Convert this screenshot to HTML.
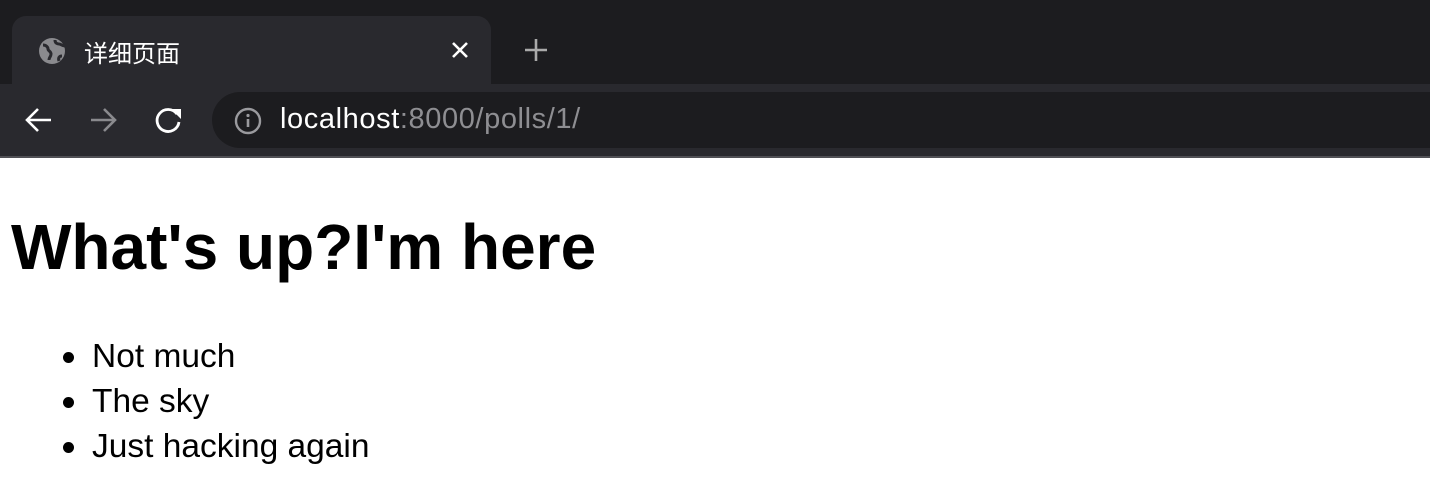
<!DOCTYPE html>
<html><head><meta charset="utf-8"><style>
*{margin:0;padding:0;box-sizing:border-box}
body{width:1430px;height:488px;overflow:hidden;background:#fff;font-family:"Liberation Sans","Noto Sans CJK SC",sans-serif;position:relative}
.top{position:absolute;left:0;top:0;width:1430px;height:84px;background:#1c1c1f}
.tab{position:absolute;left:12px;top:16px;width:479px;height:68px;background:#29292e;border-radius:14px 14px 0 0}
.tb{position:absolute;left:0;top:84px;width:1430px;height:72px;background:#29292e}
.bd{position:absolute;left:0;top:156px;width:1430px;height:2px;background:#505055}
.addr{position:absolute;left:212px;top:92px;width:1260px;height:56px;background:#1c1c1f;border-radius:28px}
.t{position:absolute;white-space:nowrap}
</style></head><body>
<div class="top"></div>
<div class="tab"></div>
<div class="tb"></div>
<div class="bd"></div>
<div class="addr"></div>
<svg style="position:absolute;left:38px;top:37px" width="28" height="28" viewBox="0 0 28 28"><circle cx="14" cy="14" r="13" fill="#8a8a8e"/><path d="M5 8c3 0 5 2 5 4s3 2 3 5-2 3-2 6M17 3c0 3 2 4 4 4s3 2 6 2M24 19c-3 0-4 2-3 5" stroke="#29292e" stroke-width="3" fill="none"/></svg>
<div class="t" style="left:84px;top:34px;font-size:24px;color:#fff">详细页面</div>
<svg style="position:absolute;left:450px;top:40px" width="20" height="20" viewBox="0 0 20 20"><path d="M3 3L17 17M17 3L3 17" stroke="#fff" stroke-width="2.6"/></svg>
<svg style="position:absolute;left:524px;top:38px" width="24" height="24" viewBox="0 0 24 24"><path d="M12 1V23M1 12H23" stroke="#aaa" stroke-width="2.6"/></svg>
<svg style="position:absolute;left:24px;top:106px" width="30" height="28" viewBox="0 0 30 28"><path d="M27 14H4M14 3L3 14L14 25" stroke="#fff" stroke-width="2.6" fill="none"/></svg>
<svg style="position:absolute;left:88px;top:106px" width="30" height="28" viewBox="0 0 30 28"><path d="M3 14H26M16 3L27 14L16 25" stroke="#8a8a8e" stroke-width="2.6" fill="none"/></svg>
<svg style="position:absolute;left:154px;top:106px" width="30" height="28" viewBox="0 0 30 28"><path d="M23 8A11 11 0 1 0 25 16" stroke="#fff" stroke-width="2.8" fill="none"/><path d="M17 3H27V13Z" fill="#fff"/></svg>
<svg style="position:absolute;left:233px;top:106px" width="30" height="30" viewBox="0 0 30 30"><circle cx="15" cy="15" r="12" stroke="#9a9a9e" stroke-width="2.4" fill="none"/><path d="M15 13V21" stroke="#9a9a9e" stroke-width="2.6"/><circle cx="15" cy="9.5" r="1.6" fill="#9a9a9e"/></svg>
<div class="t" style="left:280px;top:103px;font-size:29px;letter-spacing:0.6px;color:#fff">localhost<span style="color:#8e8e92">:8000/polls/1/</span></div>
<div class="t" style="left:11px;top:210px;font-size:64px;font-weight:bold;color:#000">What's up?I'm here</div>
<div class="t" style="left:92px;top:334px;font-size:33.5px;line-height:45px;color:#000">Not much<br>The sky<br>Just hacking again</div>
<div style="position:absolute;left:63px;top:352px;width:11px;height:11px;border-radius:50%;background:#000"></div>
<div style="position:absolute;left:63px;top:397px;width:11px;height:11px;border-radius:50%;background:#000"></div>
<div style="position:absolute;left:63px;top:442px;width:11px;height:11px;border-radius:50%;background:#000"></div>
</body></html>
